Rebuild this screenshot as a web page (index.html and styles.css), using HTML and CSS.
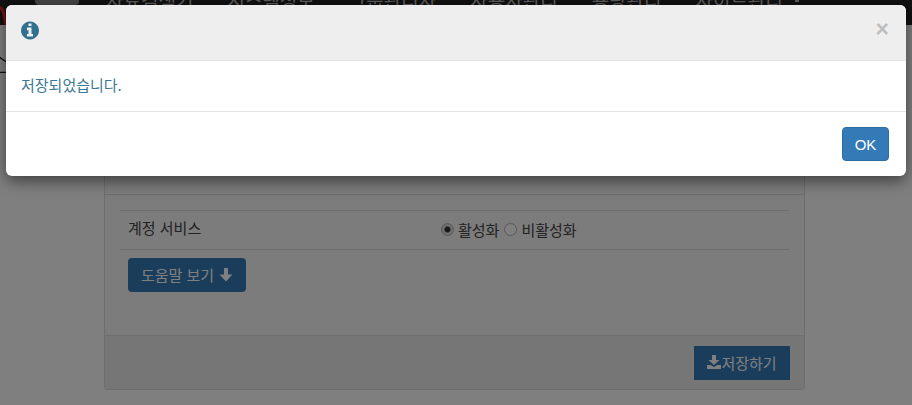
FILE: index.html
```html
<!DOCTYPE html>
<html lang="ko">
<head>
    <meta charset="UTF-8">
    <meta name="viewport" content="width=device-width, initial-scale=1.0">
    <title>계정 서비스</title>
    <link rel="stylesheet" href="styles.css">
</head>
<body>
    <nav class="navbar">
        <svg class="logo" viewBox="0 0 12 25"><path d="M-4 6a9 9 0 0 1 8 10q1 5 2 9" fill="none" stroke="#e0202a" stroke-width="3"/></svg>
        <span class="nav-tab"></span>
        <ul class="nav-menu">
            <li>자료검색기</li>
            <li>시스템정보</li>
            <li>그룹관리자</li>
            <li>사용자관리</li>
            <li>용량관리</li>
            <li>사이트관리<span class="caret"></span></li>
        </ul>
    </nav>
    <div class="subbar">
        <svg class="subbar-mark" viewBox="0 0 12 48"><path d="M-1 32l9 6M0 47.500h12" fill="none" stroke="#222" stroke-width="1.500"/></svg>
    </div>

    <section class="panel">
        <div class="panel-head"></div>
        <div class="panel-body">
            <div class="row">
                <label class="row-label">계정 서비스</label>
                <div class="row-value">
                    <input type="radio" name="service" class="radio" checked> 활성화
                    <input type="radio" name="service" class="radio radio-off"> 비활성화
                </div>
            </div>
            <button class="btn help-btn">도움말 보기
                <svg class="arrow-icon" viewBox="0 0 14 14"><path d="M5 0h4v6.500h4.500l-6.500 7-6.500-7h4.500z"/></svg>
            </button>
        </div>
        <div class="panel-footer">
            <button class="btn save-btn">
                <svg class="save-icon" viewBox="0 0 14 14"><path d="M5 0h4v5h3.500l-5.500 5-5.500-5h3.500zM0 10h3.500l3.500 2 3.500-2h3.500v4h-14z"/></svg>저장하기
            </button>
        </div>
    </section>

    <div class="backdrop"></div>

    <div class="modal">
        <div class="modal-header">
            <svg class="info-icon" viewBox="0 0 1536 1792"><path d="M1024 1376v-160q0-14-9-23t-23-9h-96v-512q0-14-9-23t-23-9h-320q-14 0-23 9t-9 23v160q0 14 9 23t23 9h96v320h-96q-14 0-23 9t-9 23v160q0 14 9 23t23 9h448q14 0 23-9t9-23zm-128-896v-160q0-14-9-23t-23-9h-192q-14 0-23 9t-9 23v160q0 14 9 23t23 9h192q14 0 23-9t9-23zm640 416q0 209-103 385.500t-279.500 279.500-385.500 103-385.500-103-279.500-279.500-103-385.500 103-385.500 279.500-279.500 385.500-103 385.500 103 279.500 279.500 103 385.500z"/></svg>
            <span class="close">×</span>
        </div>
        <div class="modal-body">저장되었습니다.</div>
        <div class="modal-footer">
            <button class="ok-btn">OK</button>
        </div>
    </div>
</body>
</html>
```

FILE: styles.css
```css
body {
    margin: 0;
    width: 912px;
    height: 405px;
    overflow: hidden;
    background-color: #fff;
    color: #444;
    font-family: "Liberation Sans", "Noto Sans CJK KR", sans-serif;
    font-size: 15px;
}
.navbar {
    height: 25px;
    background-color: #222;
    display: flex;
    overflow: hidden;
}
.logo {
    width: 12px;
    height: 25px;
    flex-shrink: 0;
}
.nav-tab {
    width: 44px;
    height: 5px;
    margin-left: 23px;
    flex-shrink: 0;
    background-color: #888;
    border-radius: 0 0 4px 4px;
}
.nav-menu {
    display: flex;
    list-style: none;
    margin: -10px 0 0 10px;
    padding: 0;
    color: #bbb;
    font-family: "Noto Sans CJK KR", sans-serif;
    font-size: 19px;
    line-height: 20px;
}
.nav-menu li {
    padding: 0 17px;
    white-space: nowrap;
}
.caret {
    display: inline-block;
    width: 4px;
    height: 2px;
    margin: 10px 0 0 12px;
    background-color: #bbb;
    vertical-align: top;
}
.subbar {
    height: 48px;
}
.subbar-mark {
    display: block;
    width: 12px;
    height: 48px;
}
.panel {
    width: 699px;
    margin: 97px 0 0 104px;
    border: 1px solid #ddd;
    border-radius: 3px;
    background-color: #f8f8f8;
}
.panel-head {
    height: 23px;
}
.panel-body {
    height: 141px;
    padding: 15px 15px 0;
    box-sizing: border-box;
    border-top: 1px solid #ddd;
}
.row {
    display: flex;
    height: 38px;
    border-top: 1px solid #ddd;
    border-bottom: 1px solid #ddd;
    font-family: "Noto Sans CJK KR", sans-serif;
    align-items: center;
}
.row-label {
    width: 313px;
    padding: 0 0 6px 8px;
}
.row-value {
    display: flex;
    align-items: center;
    gap: 4px;
    padding-bottom: 2px;
}
.radio {
    appearance: none;
    width: 13px;
    height: 13px;
    margin: 0;
    border: 1px solid #b0b0b0;
    border-radius: 50%;
    background-color: #fff;
}
.radio-off {
    margin-left: 1px;
}
.radio:checked {
    background: radial-gradient(circle, #333 0, #333 2.500px, #ddd 3.500px);
}
.btn {
    border: none;
    color: #fff;
    font-family: "Noto Sans CJK KR", sans-serif;
    font-size: 15px;
    height: 34px;
    padding: 0 0 2px;
    display: flex;
    align-items: center;
    justify-content: center;
}
.help-btn {
    width: 118px;
    margin: 8px 0 0 8px;
    gap: 5px;
    background-color: #337ab7;
    border-radius: 4px;
}
.arrow-icon {
    width: 14px;
    height: 14px;
    margin-top: 2px;
    fill: #fff;
}
.panel-footer {
    height: 54px;
    padding: 10px 14px 0 0;
    box-sizing: border-box;
    display: flex;
    justify-content: flex-end;
    background-color: #ececec;
    border-top: 1px solid #ddd;
}
.save-btn {
    width: 96px;
    background-color: #337ab7;
}
.save-icon {
    width: 14px;
    height: 14px;
    fill: #fff;
}
.backdrop {
    position: absolute;
    top: 0;
    left: 0;
    width: 912px;
    height: 405px;
    background-color: rgba(0, 0, 0, 0.5);
}
.modal {
    position: absolute;
    top: 5px;
    left: 6px;
    width: 900px;
    height: 171px;
    background-color: #fff;
    border-radius: 6px;
    box-shadow: 0 5px 15px rgba(0, 0, 0, 0.5);
    overflow: hidden;
}
.modal-header {
    height: 55px;
    padding-left: 15px;
    display: flex;
    align-items: center;
    justify-content: space-between;
    background-color: #eee;
    border-bottom: 1px solid #e5e5e5;
}
.info-icon {
    width: 18px;
    height: 21px;
    margin-top: -4px;
    fill: #31708f;
}
.close {
    margin-right: 17px;
    margin-top: -7px;
    color: #000;
    opacity: 0.2;
    font-size: 23px;
    font-weight: bold;
}
.modal-body {
    height: 50px;
    padding: 0 0 4px 15px;
    box-sizing: border-box;
    display: flex;
    align-items: center;
    color: #3d7896;
    font-family: "Noto Sans CJK KR", sans-serif;
    font-size: 15px;
}
.modal-footer {
    height: 65px;
    padding: 15px 17px 0 0;
    box-sizing: border-box;
    display: flex;
    justify-content: flex-end;
    border-top: 1px solid #e5e5e5;
}
.ok-btn {
    width: 47px;
    height: 34px;
    padding: 0;
    background-color: #337ab7;
    border: 1px solid #2e6da4;
    border-radius: 4px;
    color: #fff;
    font-family: "Liberation Sans", sans-serif;
    font-size: 15px;
}
```
